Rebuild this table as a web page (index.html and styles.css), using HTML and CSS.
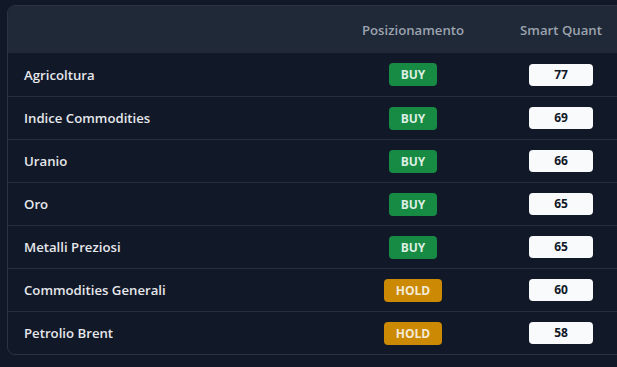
FILE: index.html
```html
<!DOCTYPE html>
<html lang="it">
<head>
<meta charset="utf-8">
<link rel="stylesheet" href="styles.css">
</head>
<body>
<div class="table">
  <div class="row head">
    <div class="cell name"></div>
    <div class="cell center">Posizionamento</div>
    <div class="cell center">Smart Quant</div>
  </div>
  <div class="row first">
    <div class="cell name">Agricoltura</div>
    <div class="cell center"><span class="badge buy">BUY</span></div>
    <div class="cell center"><span class="score">77</span></div>
  </div>
  <div class="row">
    <div class="cell name">Indice Commodities</div>
    <div class="cell center"><span class="badge buy">BUY</span></div>
    <div class="cell center"><span class="score">69</span></div>
  </div>
  <div class="row">
    <div class="cell name">Uranio</div>
    <div class="cell center"><span class="badge buy">BUY</span></div>
    <div class="cell center"><span class="score">66</span></div>
  </div>
  <div class="row">
    <div class="cell name">Oro</div>
    <div class="cell center"><span class="badge buy">BUY</span></div>
    <div class="cell center"><span class="score">65</span></div>
  </div>
  <div class="row">
    <div class="cell name">Metalli Preziosi</div>
    <div class="cell center"><span class="badge buy">BUY</span></div>
    <div class="cell center"><span class="score">65</span></div>
  </div>
  <div class="row">
    <div class="cell name">Commodities Generali</div>
    <div class="cell center"><span class="badge hold">HOLD</span></div>
    <div class="cell center"><span class="score">60</span></div>
  </div>
  <div class="row last">
    <div class="cell name">Petrolio Brent</div>
    <div class="cell center"><span class="badge hold">HOLD</span></div>
    <div class="cell center"><span class="score">58</span></div>
  </div>
</div>
</body>
</html>
```
FILE: styles.css
```css
html, body {
  margin: 0;
  padding: 0;
  background: #111827;
  overflow: hidden;
  font-family: "Open Sans", "Noto Sans", sans-serif;
}
body {
  padding: 5px 0 0 7px;
  width: 700px;
}
.table {
  width: 660px;
  border: 1px solid #2b3444;
  border-radius: 8px;
  overflow: hidden;
  background: #111827;
}
.row {
  display: grid;
  grid-template-columns: 350px 110px 186px;
  height: 43px;
  border-bottom: 1px solid #252e3d;
  box-sizing: border-box;
  align-items: center;
}
.row.first { height: 44px; }
.row.last { border-bottom: none; height: 42px; }
.row.head {
  height: 47px;
  background: #1f2937;
  border-bottom: none;
}
.cell {
  font-size: 13.2px;
  font-weight: 600;
  color: #e5e7eb;
}
.name { padding-left: 16px; }
.center { text-align: center; }
.head .cell { color: #9ca3af; }
.badge {
  display: inline-block;
  font-size: 12px;
  font-weight: 700;
  color: #dcefe2;
  line-height: 23px;
  padding: 0 12px;
  border-radius: 4px;
}
.buy { background: #178a43; }
.hold { background: #cc8a04; color: #f3ead7; }
.score {
  display: inline-block;
  width: 64px;
  line-height: 22px;
  background: #f8fafc;
  color: #111827;
  font-size: 12px;
  font-weight: 700;
  border-radius: 4px;
}
```
